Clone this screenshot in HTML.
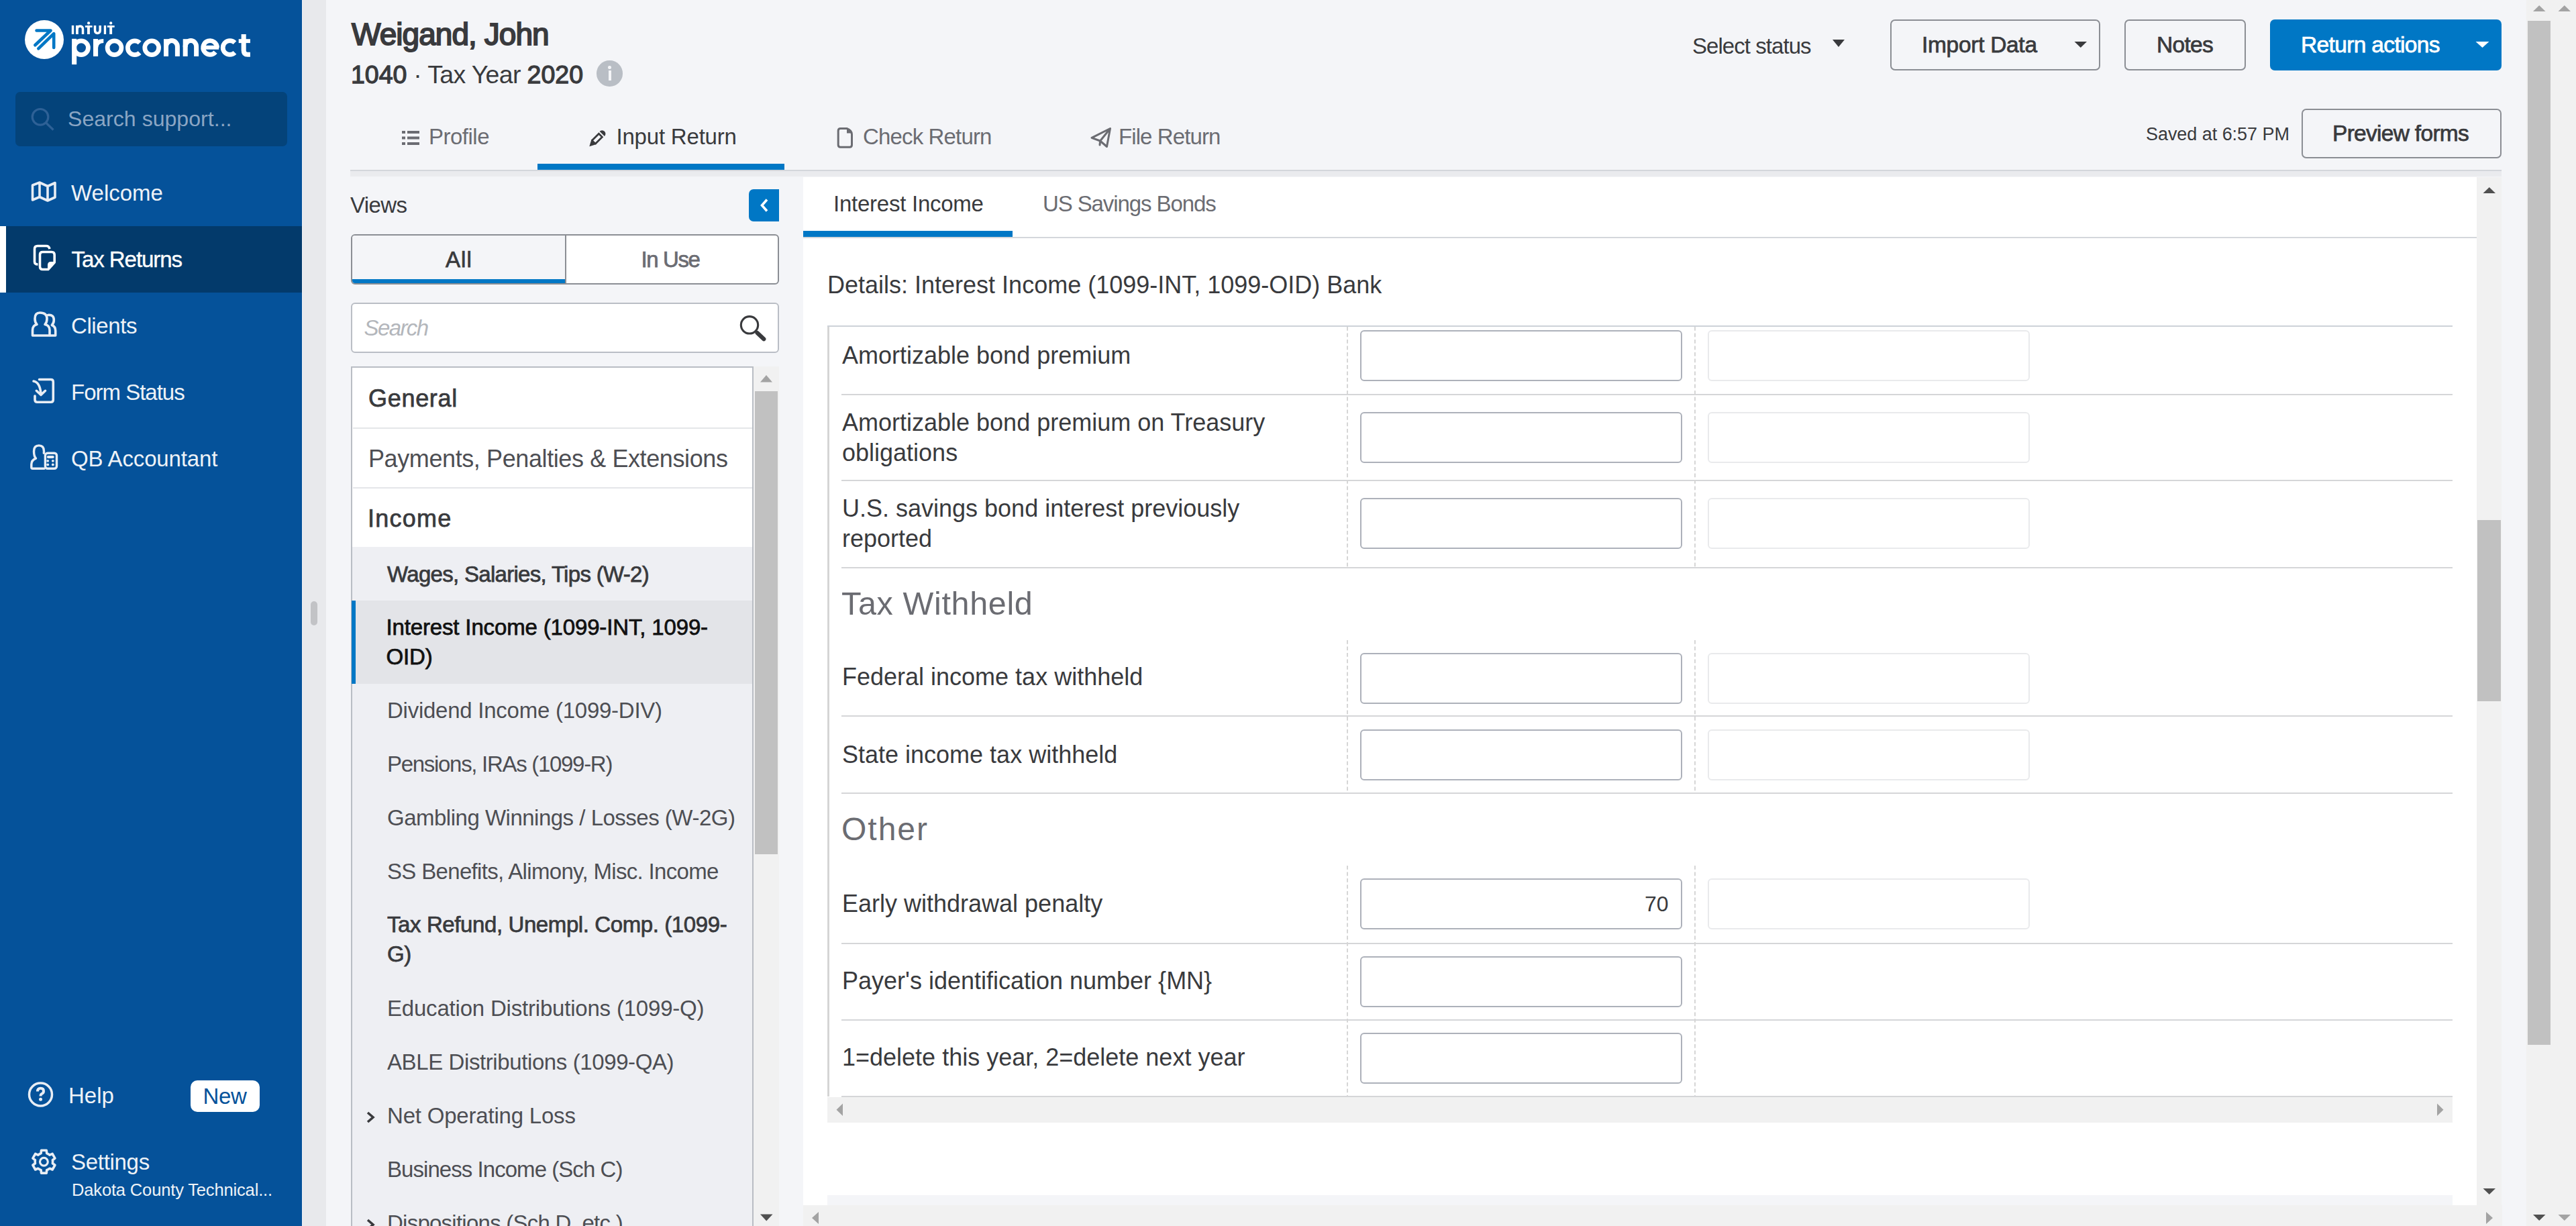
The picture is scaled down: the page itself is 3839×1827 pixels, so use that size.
<!DOCTYPE html>
<html><head><meta charset="utf-8"><title>ProConnect</title>
<style>
html,body{margin:0;padding:0}
body{width:3839px;height:1827px;overflow:hidden;position:relative;background:#f4f5f8;font-family:"Liberation Sans",sans-serif;color:#393a3d}
.a{position:absolute}
.t{position:absolute;white-space:nowrap;line-height:1}
.b{font-weight:400;-webkit-text-stroke:0.75px currentColor}
svg{position:absolute;overflow:visible}
/* sidebar */
#side{left:0;top:0;width:450px;height:1827px;background:#05529a}
.nav{color:#eef2f7;font-size:33px}
/* inputs */
.inp{position:absolute;box-sizing:border-box;width:480px;height:76px;border:2px solid #adb1ba;border-radius:6px;background:#fff}
.dis{position:absolute;box-sizing:border-box;width:480px;height:76px;border:2px solid #e9eaec;border-radius:6px;background:#fff}
.rl{position:absolute;left:1254px;width:2401px;height:2px;background:#d5d6d8}
.lbl{font-size:36px;color:#393a3d}
.tree{font-size:33px;color:#393a3d}
</style></head>
<body>
<!-- SIDEBAR -->
<div id="side" class="a"></div>
<!-- logo -->
<div class="a" style="left:37px;top:30px;width:58px;height:58px;border-radius:50%;background:#fff"></div>
<svg style="left:0;top:0" width="450" height="120">
 <g stroke="#0077c5" stroke-width="4.6" fill="none" stroke-linecap="round" stroke-linejoin="round">
  <path d="M54.5 45.5 H75.5 L52.3 67.3"/>
  <path d="M57.3 72.3 L80.2 50.2 V71"/>
 </g>
 <g fill="#fff">
  <rect x="106.8" y="37.9" width="3.4" height="13.1"/>
  <rect x="113" y="37.9" width="3.8" height="13.1"/>
  <rect x="126.9" y="38.1" width="10.7" height="2.7"/>
  <rect x="130" y="37.9" width="3.9" height="13.1"/>
  <circle cx="132.1" cy="34.4" r="2.1"/>
  <rect x="154.8" y="37.9" width="3.3" height="13.1"/>
  <rect x="159.9" y="38.1" width="10.8" height="2.7"/>
  <rect x="163.2" y="37.9" width="3.9" height="13.1"/>
  <circle cx="165.2" cy="34.4" r="2.1"/>
 </g>
 <g fill="none" stroke="#fff" stroke-width="3.5">
  <path d="M114.9 44 Q115.3 39.1 119.3 39.1 Q123.5 39.1 123.5 44 V51"/>
  <path d="M141.5 37.9 V45 Q141.5 49.4 145.3 49.4 Q149.2 49.4 149.2 45 V37.9"/>
 </g>
 <g fill="none" stroke="#fff" stroke-width="6.8">
  <circle cx="121" cy="71.2" r="10.4"/>
  <circle cx="170.5" cy="71.3" r="10.4"/>
  <path d="M208.15 63.95 A10.4 10.4 0 1 0 208.15 78.65"/>
  <circle cx="226.2" cy="71.3" r="10.4"/>
  <path d="M247.5 84 V69.5 A8.45 8.9 0 0 1 264.4 69.5 V84" stroke-width="7"/>
  <path d="M276.2 84 V69.5 A8.2 8.9 0 0 1 292.6 69.5 V84" stroke-width="7"/>
  <path d="M323.5 71 A10.4 10.4 0 1 0 321.07 77.68"/>
  <path d="M349.95 63.65 A10.4 10.4 0 1 0 349.95 78.35"/>
  <path d="M143 71 Q144 60.9 154.3 60.9" stroke-width="6"/>
  <path d="M363.15 50.9 V75 Q363.15 81.3 369 81.3 H372.9" stroke-width="7.1"/>
 </g>
 <g fill="#fff">
  <rect x="107.1" y="57.8" width="7.1" height="38.3"/>
  <rect x="139" y="58" width="7.1" height="26"/>
  <rect x="244" y="58.2" width="7" height="12"/>
  <rect x="272.7" y="58.2" width="7" height="12"/>
  <rect x="302.7" y="67.8" width="23.5" height="5.9"/>
  <rect x="355.7" y="58.2" width="17.2" height="5.9"/>
 </g>
</svg>
<!-- search support -->
<div class="a" style="left:23px;top:137px;width:405px;height:81px;border-radius:7px;background:#04437a"></div>
<svg style="left:0;top:0" width="450" height="220"><g stroke="#2e6196" stroke-width="3.2" fill="none"><circle cx="60" cy="174.3" r="11.8"/><path d="M68.5 183 L79.5 193.5"/></g></svg>
<div class="t" style="left:101px;top:161px;font-size:32px;color:#8ba6c4;letter-spacing:0.05px">Search support...</div>
<!-- nav -->
<div class="a" style="left:0;top:337px;width:450px;height:99px;background:#033a6b"></div>
<div class="a" style="left:0;top:337px;width:9px;height:99px;background:#fff"></div>
<div class="t nav" style="left:106px;top:271px">Welcome</div>
<div class="t nav" style="left:106.5px;top:370px;color:#fff;letter-spacing:-1.05px;-webkit-text-stroke:0.35px #fff">Tax Returns</div>
<div class="t nav" style="left:106px;top:469px;letter-spacing:-0.4px">Clients</div>
<div class="t nav" style="left:106px;top:568px;letter-spacing:-1px">Form Status</div>
<div class="t nav" style="left:106px;top:667px;letter-spacing:-0.15px">QB Accountant</div>
<svg style="left:0;top:0" width="450" height="750">
 <g stroke="#e8edf4" stroke-width="3.6" fill="none" stroke-linejoin="round">
  <!-- map -->
  <path d="M48.5 276 L59 272 L71 277.5 L82 272.5 V294 L71 299 L59 293.5 L48.5 298 Z M59 272 V293.5 M71 277.5 V299"/>
 </g>
 <g stroke="#fff" stroke-width="3.6" fill="none" stroke-linejoin="round">
  <!-- tax returns -->
  <path d="M74 371 Q73 366.5 69 366.5 H56 Q51.5 366.5 51.5 371 V390 Q51.5 394 56.5 394"/>
  <path d="M63.5 375.5 H77 Q81.2 375.5 81.2 379.7 V391 L71.8 401.5 H63.5 Q59.5 401.5 59.5 397.5 V379.5 Q59.5 375.5 63.5 375.5 Z"/>
  <path d="M82.5 390 L71 402.8 V395 Q71 390 76 390 Z" fill="#fff" stroke="none"/>
 </g>
 <g stroke="#e8edf4" stroke-width="3.6" fill="none" stroke-linejoin="round" stroke-linecap="round">
  <!-- clients -->
  <path d="M59.5 466 Q52 466 52 475 Q52 480.5 55 483.5 Q48.5 485 48.5 492 V500 H74 V492 Q74 485 67 483.5 Q70 480.5 70 475 Q70 466 59.5 466 Z"/>
  <path d="M71.5 469.5 Q80.3 468.5 80.3 477 Q80.3 481.5 77.3 484.5 Q82.7 486.5 82.7 493 V500 H75"/>
  <!-- form status -->
  <path d="M58.5 565.5 H75.8 Q79.3 565.5 79.3 569 V595.5 Q79.3 599.3 75.8 599.3 H55.5 Q52 599.3 52 595.8 V590"/>
  <path d="M50 568 Q59.5 569.5 61 587 M54.3 582.3 L61 588.5 L67.5 582.3"/>
  <!-- QB accountant -->
  <path d="M66 698.2 H48.5 Q46.8 698.2 46.8 696.5 V692 Q46.8 685.8 53.5 683.2 Q50.5 680 50.5 672.5 Q50.5 663.9 58 663.9 Q65.5 663.9 65.5 672.5 Q65.5 674 65.3 675.2" stroke-width="3.4"/>
  <rect x="67.4" y="675.2" width="17.1" height="23" rx="3.5" stroke-width="3.4"/>
 </g>
 <g fill="#e8edf4">
  <rect x="69.8" y="679" width="11" height="4" rx="2"/>
  <circle cx="71.2" cy="686.8" r="1.9"/><circle cx="78.8" cy="686.8" r="1.9"/>
  <circle cx="71.2" cy="692.4" r="1.9"/><circle cx="78.8" cy="692.4" r="1.9"/>
 </g>
</svg>
<!-- bottom -->
<svg style="left:0;top:1580px" width="450" height="200">
 <g stroke="#e8edf4" stroke-width="3.5" fill="none">
  <circle cx="60.5" cy="51" r="17"/>
  <path d="M56 46.5 Q56 41.8 60.5 41.8 Q65 41.8 65 46 Q65 48.8 62.3 50 Q60.5 50.8 60.5 53.5" stroke-width="4"/>
 </g>
 <circle cx="60.5" cy="58.3" r="2.5" fill="#e8edf4"/>
</svg>
<div class="t nav" style="left:102px;top:1615.5px;letter-spacing:0px">Help</div>
<div class="a" style="left:284px;top:1610px;width:103px;height:47px;border-radius:10px;background:#fff"></div>
<div class="t" style="left:302.5px;top:1617px;font-size:33px;color:#05529a;letter-spacing:-0.3px">New</div>
<svg style="left:0;top:1700px" width="450" height="80">
 <g stroke="#e8edf4" stroke-width="3.6" fill="none" stroke-linejoin="round">
  <path d="M58.8 19.8 L61.1 18.7 L61.5 14.3 L69.3 14.3 L69.7 18.7 L72.0 19.8 L74.1 21.2 L78.1 19.4 L81.9 26.1 L78.4 28.7 L78.6 31.2 L78.4 33.7 L81.9 36.3 L78.1 43.0 L74.1 41.2 L72.0 42.6 L69.7 43.7 L69.3 48.1 L61.5 48.1 L61.1 43.7 L58.8 42.6 L56.7 41.2 L52.7 43.0 L48.9 36.3 L52.4 33.7 L52.2 31.2 L52.4 28.7 L48.9 26.1 L52.7 19.4 L56.7 21.2 Z"/>
  <circle cx="65.4" cy="31.2" r="5.9" stroke-width="3.2"/>
 </g>
</svg>
<div class="t nav" style="left:106px;top:1715px;letter-spacing:-0.3px">Settings</div>
<div class="t" style="left:107px;top:1760.5px;font-size:25.5px;color:#eef2f7;letter-spacing:-0.15px">Dakota County Technical...</div>

<div class="a" style="left:450px;top:0;width:1px;height:1827px;background:#f0f2f5"></div>
<div class="a" style="left:451px;top:0;width:35px;height:1827px;background:#e8e9ec"></div>
<div class="a" style="left:463px;top:896px;width:10px;height:36px;border-radius:5px;background:#c2c3c6"></div>

<!-- main header -->
<div class="t b" style="left:524px;top:27.5px;font-size:46px;color:#393a3d;letter-spacing:-0.95px;-webkit-text-stroke:1.9px #393a3d">Weigand, John</div>
<div class="t" style="left:523px;top:93px;font-size:37.5px;color:#393a3d;letter-spacing:-0.65px"><span class="b" style="letter-spacing:0px;-webkit-text-stroke:1.3px #393a3d">1040</span> · Tax Year <span class="b" style="letter-spacing:0px;-webkit-text-stroke:1.3px #393a3d">2020</span></div>
<div class="a" style="left:889px;top:90px;width:38.5px;height:38.5px;border-radius:50%;background:#b9bec5"></div>
<div class="a" style="left:906.7px;top:105.2px;width:4.2px;height:15px;background:#f4f5f8"></div>
<div class="a" style="left:906.3px;top:98.2px;width:4.6px;height:4.6px;border-radius:50%;background:#f4f5f8"></div>
<!-- tabs -->
<svg style="left:0;top:0" width="1900" height="260">
 <g fill="#6b6c72">
  <rect x="599" y="195" width="5" height="4"/><rect x="607" y="195" width="18" height="4"/>
  <rect x="599" y="203.5" width="5" height="4"/><rect x="607" y="203.5" width="18" height="4"/>
  <rect x="599" y="212" width="5" height="4"/><rect x="607" y="212" width="18" height="4"/>
 </g>
 <g transform="translate(878.3 218.3) rotate(-45)">
  <path d="M8.5 -3.5 H23.5 V3.5 H8.5" fill="none" stroke="#393a3d" stroke-width="2.7"/>
  <path d="M0 0 L9 -4.85 L10.5 -4.85 L10.5 4.85 L9 4.85 Z" fill="#393a3d"/>
  <path d="M26.8 -5.2 A5.2 5.2 0 0 1 26.8 5.2 Z" fill="#393a3d"/>
 </g>
 <g fill="none" stroke="#6b6c72" stroke-width="3" stroke-linejoin="round">
  <path d="M1252.5 191.5 H1262 Q1269 194 1269.5 200 V216 Q1269.5 219.3 1266.3 219.3 H1252.5 Q1249.2 219.3 1249.2 216 V194.8 Q1249.2 191.5 1252.5 191.5 Z"/>
  <path d="M1627 205.3 L1654.5 191.5 L1649.5 218.5 L1639.6 210 Z M1639.6 210 L1654.5 191.5 M1639.6 210 L1639 216" stroke-linecap="round"/>
 </g>
 <path d="M1262 192 Q1268 194 1269 198.5 H1262 Z" fill="#6b6c72"/>
</svg>
<div class="t" style="left:639px;top:186.5px;font-size:33px;color:#6b6c72;letter-spacing:-0.5px">Profile</div>
<div class="t" style="left:918.5px;top:186.5px;font-size:33px;color:#393a3d;letter-spacing:-0.2px">Input Return</div>
<div class="t" style="left:1286px;top:186.5px;font-size:33px;color:#6b6c72;letter-spacing:-0.85px">Check Return</div>
<div class="t" style="left:1667px;top:186.5px;font-size:33px;color:#6b6c72;letter-spacing:-0.9px">File Return</div>
<div class="a" style="left:801px;top:244px;width:368px;height:9px;background:#0077c5"></div>
<!-- right header -->
<div class="t" style="left:2522px;top:51.5px;font-size:33px;color:#393a3d;letter-spacing:-0.95px">Select status</div>
<svg style="left:0;top:0" width="3839" height="120"><path d="M2731 59 H2749 L2740 70 Z" fill="#393a3d"/><path d="M3091.5 62 H3110 L3100.8 71 Z" fill="#393a3d"/></svg>
<div class="a" style="left:2817px;top:29px;width:312.5px;height:75.5px;box-sizing:border-box;border:2.5px solid #8b8e94;border-radius:7px"></div>
<div class="t b" style="left:2864px;top:49.5px;font-size:33.5px;color:#393a3d;letter-spacing:-0.3px">Import Data</div>
<div class="a" style="left:3166px;top:29px;width:180.5px;height:75.5px;box-sizing:border-box;border:2.5px solid #8b8e94;border-radius:7px"></div>
<div class="t b" style="left:3214px;top:49.5px;font-size:33.5px;color:#393a3d;letter-spacing:-0.7px">Notes</div>
<div class="a" style="left:3383px;top:29px;width:345px;height:75.5px;border-radius:7px;background:#0077c5"></div>
<div class="t b" style="left:3429px;top:49.5px;font-size:33.5px;color:#fff;letter-spacing:-0.65px">Return actions</div>
<svg style="left:0;top:0" width="3839" height="120"><path d="M3689.5 62 H3709.5 L3699.5 71 Z" fill="#fff"/></svg>
<div class="t" style="left:3198px;top:186.5px;font-size:27px;color:#393a3d;letter-spacing:-0.05px">Saved at 6:57 PM</div>
<div class="a" style="left:3429.5px;top:161.5px;width:298.5px;height:74px;box-sizing:border-box;border:2.5px solid #8b8e94;border-radius:7px"></div>
<div class="t b" style="left:3476px;top:181.5px;font-size:33.5px;color:#393a3d;letter-spacing:-0.7px">Preview forms</div>
<div class="a" style="left:522px;top:253px;width:3206px;height:2px;background:#d3d6db"></div>
<div class="a" style="left:522px;top:255px;width:3206px;height:8px;background:#eaebee"></div>

<!-- left panel -->
<div class="t" style="left:522px;top:288.5px;font-size:33px;color:#393a3d;letter-spacing:-0.6px">Views</div>
<div class="a" style="left:1116px;top:282px;width:45px;height:48px;border-radius:7px 0 0 7px;background:#0077c5"></div>
<svg style="left:0;top:0" width="1200" height="560">
 <path d="M1143 297.5 L1135.5 306 L1143 314.5" fill="none" stroke="#fff" stroke-width="3.6"/>
</svg>
<div class="a" style="left:522.5px;top:348.5px;width:638px;height:75px;box-sizing:border-box;border:2px solid #8b8e94;border-radius:6px;background:#fff;overflow:hidden">
  <div class="a" style="left:0;top:0;width:317px;height:71px;background:#f4f5f8"></div>
  <div class="a" style="left:0;top:65px;width:317px;height:6px;background:#0077c5"></div>
  <div class="a" style="left:317px;top:0;width:2px;height:71px;background:#8b8e94"></div>
</div>
<div class="t b" style="left:664px;top:369.5px;font-size:33px;color:#393a3d;letter-spacing:1.1px">All</div>
<div class="t b" style="left:955.5px;top:369.5px;font-size:33px;color:#6b6c72;letter-spacing:-1.4px">In Use</div>
<div class="a" style="left:522.5px;top:451px;width:638px;height:75px;box-sizing:border-box;border:2px solid #babec5;border-radius:6px;background:#fff"></div>
<div class="t" style="left:542.5px;top:472px;font-size:33px;color:#b3b6bb;font-style:italic;letter-spacing:-1.6px">Search</div>
<svg style="left:0;top:0" width="1200" height="560">
 <circle cx="1117" cy="484.3" r="12.7" fill="none" stroke="#393a3d" stroke-width="3.1"/>
 <path d="M1128.5 496 L1138.3 505.3" stroke="#393a3d" stroke-width="6.2" stroke-linecap="round"/>
</svg>
<!-- tree -->
<div class="a" style="left:522.5px;top:545.5px;width:600.5px;height:1300px;box-sizing:border-box;border:2px solid #b9bdc4;background:#eeeff3"></div>
<div class="a" style="left:524.5px;top:547.5px;width:596.5px;height:267.5px;background:#fff"></div>
<div class="a" style="left:526px;top:637px;width:595px;height:2px;background:#e4e6e9"></div>
<div class="a" style="left:526px;top:726px;width:595px;height:2px;background:#e4e6e9"></div>
<div class="a" style="left:524.5px;top:894.5px;width:596.5px;height:124px;background:#e3e4e8"></div>
<div class="a" style="left:524px;top:894.5px;width:6px;height:124px;background:#0077c5"></div>
<div class="t b tree" style="left:549px;top:576px;font-size:36px;letter-spacing:0.7px">General</div>
<div class="t tree" style="left:549px;top:665.5px;font-size:36px;color:#4d4e53;letter-spacing:-0.4px">Payments, Penalties &amp; Extensions</div>
<div class="t b tree" style="left:548px;top:754.5px;font-size:36px;letter-spacing:1.25px">Income</div>
<div class="t b tree" style="left:577px;top:838.5px;letter-spacing:-0.7px">Wages, Salaries, Tips (W-2)</div>
<div class="a b" style="left:575.5px;top:913.3px;font-size:33px;line-height:44px;color:#111;width:540px;letter-spacing:-0.15px">Interest Income (1099-INT, 1099-<br>OID)</div>
<div class="t tree" style="left:577px;top:1042px;color:#4d4e53;letter-spacing:-0.25px">Dividend Income (1099-DIV)</div>
<div class="t tree" style="left:577px;top:1122px;color:#4d4e53;letter-spacing:-1.3px">Pensions, IRAs (1099-R)</div>
<div class="t tree" style="left:577px;top:1201.5px;color:#4d4e53;letter-spacing:-0.5px">Gambling Winnings / Losses (W-2G)</div>
<div class="t tree" style="left:577px;top:1282px;color:#4d4e53;letter-spacing:-0.67px">SS Benefits, Alimony, Misc. Income</div>
<div class="a b" style="left:577px;top:1356px;font-size:33px;line-height:44px;color:#393a3d;width:540px;letter-spacing:-0.4px">Tax Refund, Unempl. Comp. (1099-<br>G)</div>
<div class="t tree" style="left:577px;top:1486px;color:#4d4e53;letter-spacing:-0.2px">Education Distributions (1099-Q)</div>
<div class="t tree" style="left:577px;top:1565.5px;color:#4d4e53;letter-spacing:-0.4px">ABLE Distributions (1099-QA)</div>
<div class="t tree" style="left:577px;top:1646px;color:#4d4e53;letter-spacing:-0.2px">Net Operating Loss</div>
<div class="t tree" style="left:577px;top:1725.5px;color:#4d4e53;letter-spacing:-0.95px">Business Income (Sch C)</div>
<div class="t tree" style="left:577px;top:1806px;color:#4d4e53;letter-spacing:-0.75px">Dispositions (Sch D, etc.)</div>
<svg style="left:0;top:0" width="1200" height="1827">
 <path d="M548 1658 L556 1665 L548 1672" fill="none" stroke="#393a3d" stroke-width="3.6"/>
 <path d="M548 1818 L556 1825 L548 1832" fill="none" stroke="#393a3d" stroke-width="3.6"/>
</svg>
<!-- tree scrollbar -->
<div class="a" style="left:1123px;top:545.5px;width:38px;height:1282px;background:#f1f1f1"></div>
<div class="a" style="left:1125px;top:583px;width:34px;height:690px;background:#c1c1c1"></div>
<svg style="left:0;top:0" width="1200" height="1827">
 <path d="M1133 569.5 H1151 L1142 559 Z" fill="#a3a3a3"/>
 <path d="M1133 1809.5 H1151.5 L1142.2 1819.5 Z" fill="#505050"/>
</svg>

<!-- content panel -->
<div class="a" style="left:1197px;top:264px;width:2494px;height:1532px;background:#fff"></div>
<div class="t" style="left:1242px;top:287px;font-size:33px;color:#393a3d;letter-spacing:-0.25px">Interest Income</div>
<div class="t" style="left:1554px;top:287px;font-size:33px;color:#6b6c72;letter-spacing:-1.1px">US Savings Bonds</div>
<div class="a" style="left:1197px;top:353px;width:2494px;height:2px;background:#d4d7dc"></div>
<div class="a" style="left:1197px;top:344px;width:312px;height:9px;background:#0077c5"></div>
<div class="t" style="left:1233px;top:407px;font-size:36px;color:#393a3d">Details: Interest Income (1099-INT, 1099-OID) Bank</div>
<!-- table -->
<div class="a" style="left:1233px;top:485px;width:2422px;height:2px;background:#cdd2d8"></div>
<div class="a" style="left:1233px;top:487px;width:3px;height:1147px;background:#d5d5d5"></div>
<div class="rl" style="top:587px"></div>
<div class="rl" style="top:715px"></div>
<div class="rl" style="top:845px"></div>
<div class="rl" style="top:1066px"></div>
<div class="rl" style="top:1181px"></div>
<div class="rl" style="top:1405px"></div>
<div class="rl" style="top:1519px"></div>
<div class="rl" style="top:1633px"></div>
<!-- dashed col dividers -->
<svg style="left:0;top:0" width="3839" height="1827">
 <g stroke="#d6d6d6" stroke-width="2" stroke-dasharray="5.75 3.75">
  <path d="M2008 487 V845 M2526 487 V845"/>
  <path d="M2008 954 V1181 M2526 954 V1181"/>
  <path d="M2008 1290 V1633 M2526 1290 V1633"/>
 </g>
</svg>
<!-- labels -->
<div class="t lbl" style="left:1255px;top:512px">Amortizable bond premium</div>
<div class="a lbl" style="left:1255px;top:607px;line-height:45px;width:700px">Amortizable bond premium on Treasury<br>obligations</div>
<div class="a lbl" style="left:1255px;top:735px;line-height:45px;width:700px">U.S. savings bond interest previously<br>reported</div>
<div class="t" style="left:1254px;top:874.5px;font-size:48.5px;color:#6b6c72;letter-spacing:0.65px">Tax Withheld</div>
<div class="t lbl" style="left:1255px;top:991px">Federal income tax withheld</div>
<div class="t lbl" style="left:1255px;top:1106.5px">State income tax withheld</div>
<div class="t" style="left:1254px;top:1211.7px;font-size:48px;color:#6b6c72;letter-spacing:2px">Other</div>
<div class="t lbl" style="left:1255px;top:1329px">Early withdrawal penalty</div>
<div class="t lbl" style="left:1255px;top:1444px">Payer's identification number {MN}</div>
<div class="t lbl" style="left:1255px;top:1558px">1=delete this year, 2=delete next year</div>
<!-- inputs -->
<div class="inp" style="left:2027px;top:492px"></div><div class="dis" style="left:2545px;top:492px"></div>
<div class="inp" style="left:2027px;top:614px"></div><div class="dis" style="left:2545px;top:614px"></div>
<div class="inp" style="left:2027px;top:742px"></div><div class="dis" style="left:2545px;top:742px"></div>
<div class="inp" style="left:2027px;top:972.5px"></div><div class="dis" style="left:2545px;top:972.5px"></div>
<div class="inp" style="left:2027px;top:1087px"></div><div class="dis" style="left:2545px;top:1087px"></div>
<div class="inp" style="left:2027px;top:1309px"></div><div class="dis" style="left:2545px;top:1309px"></div>
<div class="inp" style="left:2027px;top:1425px"></div>
<div class="inp" style="left:2027px;top:1539px"></div>
<div class="t" style="left:2451px;top:1330.5px;font-size:32px;color:#393a3d">70</div>
<!-- table h scrollbar -->
<div class="a" style="left:1233px;top:1635px;width:2422px;height:38px;background:#f1f1f1"></div>
<svg style="left:0;top:0" width="3839" height="1827">
 <path d="M1256 1644.5 V1663 L1246.5 1653.8 Z" fill="#a3a3a3"/>
 <path d="M3632 1644.5 V1663 L3641.5 1653.8 Z" fill="#a3a3a3"/>
</svg>
<div class="a" style="left:1233px;top:1781px;width:2422px;height:15px;background:#f4f5f8"></div>
<!-- content h scrollbar -->
<div class="a" style="left:1197px;top:1796px;width:2532px;height:31px;background:#f1f1f1"></div>
<!-- content v scrollbar -->
<div class="a" style="left:3691px;top:264px;width:37px;height:1532px;background:#f1f1f1"></div>
<div class="a" style="left:3692px;top:775px;width:35px;height:270px;background:#c1c1c1"></div>
<svg style="left:0;top:0" width="3839" height="1827">
 <path d="M3700.5 288 H3719 L3709.8 279 Z" fill="#505050"/>
 <path d="M3700.5 1771 H3719 L3709.8 1780 Z" fill="#505050"/>
 <path d="M1220 1806 V1824 L1210 1815 Z" fill="#a3a3a3"/>
 <path d="M3705 1806 V1824 L3715 1815 Z" fill="#a3a3a3"/>
</svg>

<!-- page scrollbars -->
<div class="a" style="left:3765px;top:0;width:36px;height:1827px;background:#f1f1f1"></div>
<div class="a" style="left:3801px;top:0;width:38px;height:1827px;background:#f1f1f1"></div>
<div class="a" style="left:3767px;top:31px;width:34px;height:1526px;background:#c1c1c1"></div>
<svg style="left:0;top:0" width="3839" height="1827">
 <path d="M3775 17 H3793.5 L3784.2 8 Z" fill="#a3a3a3"/>
 <path d="M3812.5 17 H3831 L3821.8 8 Z" fill="#a3a3a3"/>
 <path d="M3775 1810 H3793.5 L3784.2 1819 Z" fill="#505050"/>
 <path d="M3812.5 1810 H3831 L3821.8 1819 Z" fill="#a3a3a3"/>
</svg>

</body></html>
